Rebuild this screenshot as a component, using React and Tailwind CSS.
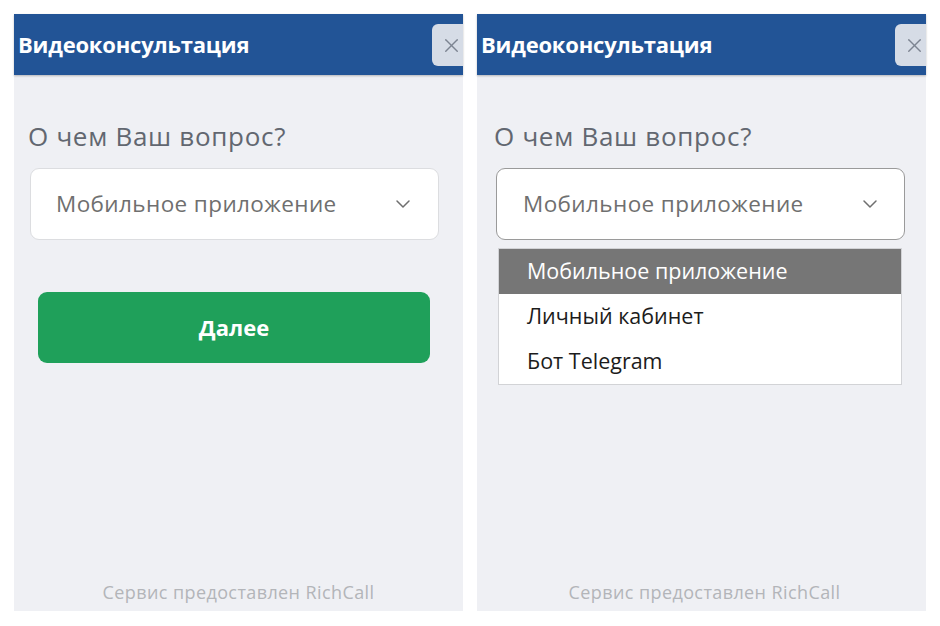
import { ChevronDown, X } from 'lucide-react';

const OPTIONS = ['Мобильное приложение', 'Личный кабинет', 'Бот Telegram'];

function Header() {
  return (
    <div className="h-[61px] shrink-0 flex items-center justify-between bg-[#225496] shadow-[0_1px_2px_rgba(0,0,0,0.25)]">
      <span className="pl-[4px] text-[22px] font-bold text-white tracking-[-0.2px]">Видеоконсультация</span>
      <button className="w-[31px] h-[42px] mt-[1px] rounded-l-[6px] bg-[#d6dce6] flex items-center pl-[8px] text-[#7d8491]">
        <X size={25} strokeWidth={1.5} />
      </button>
    </div>
  );
}

function Select({ open }) {
  return (
    <div
      className={
        open
          ? 'h-[72px] rounded-[9px] bg-white border-[1.5px] border-[#9a9a9a] flex items-center justify-between pl-[26px] pr-[22px]'
          : 'h-[72px] rounded-[9px] bg-white border border-[#dcdde0] flex items-center justify-between pl-[25px] pr-[23px]'
      }
    >
      <span className="text-[22.5px] text-[#6f6f6f] tracking-[0.4px]">Мобильное приложение</span>
      <ChevronDown size={24} strokeWidth={1.5} className="text-[#6f6f6f]" />
    </div>
  );
}

function Panel({ open }) {
  return (
    <div className="w-[449px] h-[597px] flex flex-col bg-[#eff0f4]">
      <Header />
      <div className={open ? 'flex-1 flex flex-col pl-[17px] pr-[11px] pt-[46px]' : 'flex-1 flex flex-col px-[14px] pt-[46px]'}>
        <div className="text-[26px] leading-[30px] text-[#626770] tracking-[0.7px]">О чем Ваш вопрос?</div>
        <div className="mt-[17px] pl-[2px] pr-[10px]">
          <Select open={open} />
        </div>
        {open ? (
          <div className="mt-[8px] ml-[4px] w-[404px] bg-white border border-[#d2d3d6]">
            {OPTIONS.map((o, i) => (
              <div
                key={o}
                className={
                  i === 0
                    ? 'h-[45px] flex items-center pl-[28px] bg-[#767676] text-white text-[21.5px]'
                    : 'h-[45px] flex items-center pl-[28px] text-[#1c1c1c] text-[21.5px]'
                }
              >
                {o}
              </div>
            ))}
          </div>
        ) : (
          <button className="mt-[52px] ml-[10px] w-[392px] h-[71px] rounded-[9px] bg-[#1fa05a] text-white text-[22px] font-bold">
            Далее
          </button>
        )}
        <div className="mt-auto mb-[5px] text-center text-[18px] text-[#b3b5b9] tracking-[0.4px]">
          Сервис предоставлен RichCall
        </div>
      </div>
    </div>
  );
}

export default function App() {
  return (
    <div className="w-[940px] h-[626px] bg-white flex gap-[14px] pl-[14px] pt-[14px] font-['Open_Sans',sans-serif]">
      <Panel open={false} />
      <Panel open />
    </div>
  );
}
